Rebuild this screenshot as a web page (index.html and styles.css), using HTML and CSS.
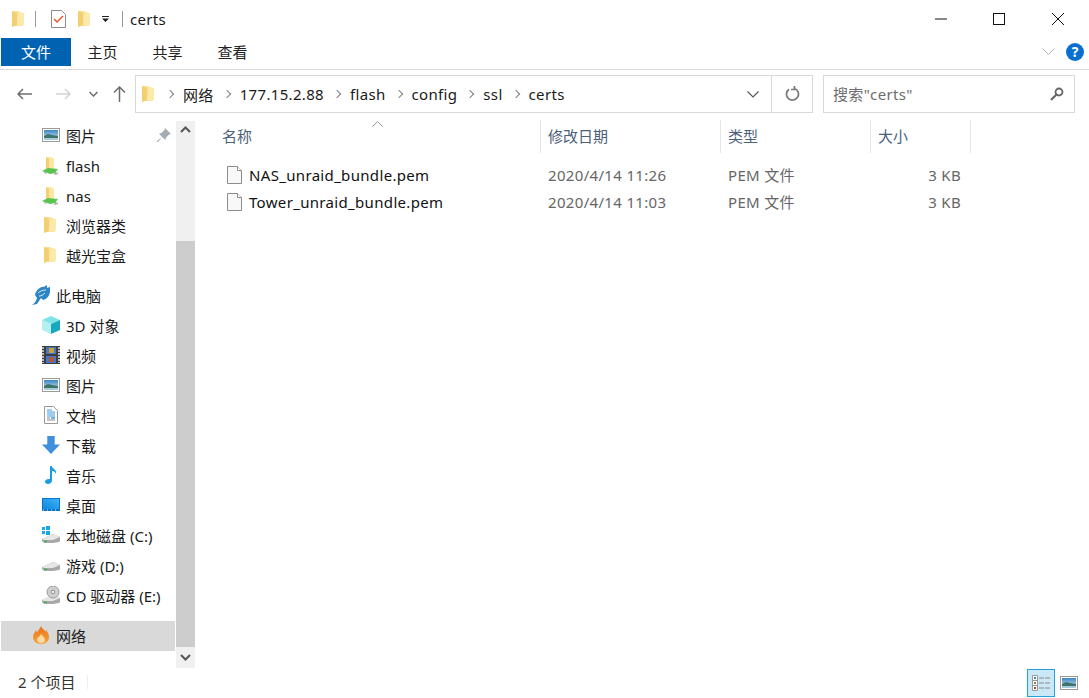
FILE: index.html
```html
<!DOCTYPE html>
<html lang="zh-CN">
<head>
    <meta charset="UTF-8">
    <title>certs</title>
    <link rel="stylesheet" href="styles.css">
</head>
<body>
    <!-- Shared icons -->
    <svg class="defs" width="0" height="0">
        <defs>
            <linearGradient id="folderFill" x1="0" y1="0" x2="1" y2="0">
                <stop offset="0" stop-color="#f7dc8b"/>
                <stop offset="1" stop-color="#fbe9ae"/>
            </linearGradient>
            <linearGradient id="skyFill" x1="0" y1="0" x2="0" y2="1">
                <stop offset="0" stop-color="#3d86c6"/>
                <stop offset="1" stop-color="#d6e8f0"/>
            </linearGradient>
            <linearGradient id="deskFill" x1="0" y1="1" x2="1" y2="0">
                <stop offset="0" stop-color="#0f86dc"/>
                <stop offset="1" stop-color="#3cb4f7"/>
            </linearGradient>
            <linearGradient id="fireFill" x1="0" y1="0" x2="0" y2="1">
                <stop offset="0" stop-color="#e9701c"/>
                <stop offset="1" stop-color="#f6a53a"/>
            </linearGradient>
            <symbol id="folder" viewBox="0 0 14 18">
                <path d="M1 1h6l5 2v13H3l-2 1z" fill="url(#folderFill)"/>
                <path d="M1 1v16l5-2V3z" fill="#f3cf72"/>
                <path d="M8 3h5v12H6z" fill="#fde9a9"/>
            </symbol>
            <symbol id="netfolder" viewBox="0 0 18 18">
                <path d="M4 0h5l3 2v12H4z" fill="#fbe6a2"/>
                <path d="M4 0v14l3-1V2z" fill="#f3cf72"/>
                <path d="M0 14l6-3 10 1-3 4-5 1z" fill="#59c34f"/>
                <path d="M0 14l2 1 1 2 2-1zM13 15l3 1v1l-4 1z" fill="#a9a9a9"/>
            </symbol>
            <symbol id="picture" viewBox="0 0 18 14">
                <rect x="0.5" y="0.5" width="17" height="13" fill="#fff" stroke="#9a9a9a"/>
                <rect x="2" y="2" width="14" height="10" fill="url(#skyFill)"/>
                <path d="M2 8l4-2 4 1 6 1v2H2z" fill="#3f7566"/>
                <path d="M2 10h14v2H2z" fill="#a8cbdc"/>
            </symbol>
            <symbol id="cube" viewBox="0 0 18 18">
                <path d="M9 0l9 4-9 4-9-4z" fill="#7fe3ea"/>
                <path d="M0 4l9 4v10l-9-4z" fill="#b4f0f0"/>
                <path d="M18 4l-9 4v10l9-4z" fill="#17a9bd"/>
            </symbol>
            <symbol id="film" viewBox="0 0 18 18">
                <rect width="18" height="18" fill="#3d3d3d"/>
                <path d="M1 1v16M17 1v16" stroke="#bbb" stroke-width="2" stroke-dasharray="2 1"/>
                <rect x="4" y="1" width="10" height="7" fill="#4a76c0"/>
                <rect x="4" y="10" width="10" height="7" fill="#3f77d6"/>
                <rect x="7" y="2" width="5" height="5" fill="#c9a23a"/>
                <rect x="7" y="11" width="5" height="5" fill="#b5562d"/>
            </symbol>
            <symbol id="doc" viewBox="0 0 14 18">
                <path d="M.5.5h9l4 4v13H.5z" fill="#fff" stroke="#9a9a9a"/>
                <path d="M3 4h5M3 6h8M3 8h8M3 10h8" stroke="#3b9ae1"/>
                <path d="M3 12h3M3 14h8" stroke="#8a8a8a"/>
                <rect x="7" y="11" width="4" height="2" fill="#6fb0dd"/>
            </symbol>
            <symbol id="download" viewBox="0 0 17 17">
                <path d="M5 0h7v8h5l-8.500 9L0 8h5z" fill="#3f8fdc"/>
            </symbol>
            <symbol id="music" viewBox="0 0 12 18">
                <path d="M5 0h2c0 3 5 3 4 8-1-2-2-3-4-3v9.500c0 2-2 3.500-4 3.500s-3-1-3-2.500 2-3 5-2.500z" fill="#1a9de6"/>
            </symbol>
            <symbol id="desktop" viewBox="0 0 18 13">
                <rect width="18" height="13" fill="#0a75c9"/>
                <rect x="1" y="1" width="16" height="10" fill="url(#deskFill)"/>
                <path d="M1 12h16" stroke="#cfe8f8" stroke-dasharray="1 3"/>
            </symbol>
            <symbol id="drive" viewBox="0 0 18 9">
                <path d="M0 5l11-5 7 3v4l-1 1-6 1H2L0 7z" fill="#a8a8a8"/>
                <path d="M0 5l11-5 7 3-7 3H2z" fill="#e6e6e6"/>
                <rect x="2" y="6.500" width="3" height="1.500" fill="#3bb44a"/>
            </symbol>
            <symbol id="file" viewBox="0 0 15 18">
                <path d="M.5.500h10l4 4v13H.5z" fill="#f8f8f8" stroke="#8c8c8c"/>
                <path d="M10.500.500v4h4" fill="#fff" stroke="#8c8c8c"/>
            </symbol>
        </defs>
    </svg>

    <div class="window">
        <!-- Title bar -->
        <header class="titlebar">
            <div class="quick">
                <svg class="ico-folder"><use href="#folder"/></svg>
                <span class="vsep"></span>
                <svg class="ico-check" viewBox="0 0 15 18">
                    <path d="M.5.500h10l4 4v13H.5z" fill="#fff" stroke="#8c8c8c"/>
                    <path d="M3 9l3 3 6-6" fill="none" stroke="#e8562a" stroke-width="1.500"/>
                </svg>
                <svg class="ico-folder"><use href="#folder"/></svg>
                <svg class="ico-qat" viewBox="0 0 7 6">
                    <path d="M0 0h7v1H0zM0 2.500h7L3.500 6z" fill="#222"/>
                </svg>
                <span class="vsep"></span>
                <span class="title-text">certs</span>
            </div>
            <div class="win-btns">
                <svg class="win-btn" viewBox="0 0 12 12"><path d="M0 6h12" stroke="#111"/></svg>
                <svg class="win-btn" viewBox="0 0 12 12"><rect x="0.500" y="0.500" width="11" height="11" fill="none" stroke="#111"/></svg>
                <svg class="win-btn" viewBox="0 0 12 12"><path d="M0 0l12 12M12 0L0 12" stroke="#111"/></svg>
            </div>
        </header>

        <!-- Ribbon tabs -->
        <nav class="tabs">
            <a class="tab tab-file">文件</a>
            <a class="tab">主页</a>
            <a class="tab">共享</a>
            <a class="tab">查看</a>
            <span class="tabs-right">
                <svg class="ico-collapse" viewBox="0 0 13 7"><path d="M.5.500l6 6 6-6" fill="none" stroke="#b5b5b5"/></svg>
                <span class="help">?</span>
            </span>
        </nav>

        <!-- Address row -->
        <div class="addressrow">
            <div class="navbtns">
                <svg class="nav-arrow" viewBox="0 0 15 12"><path d="M15 6H1M6 1L1 6l5 5" fill="none" stroke="#6d6d6d" stroke-width="1.500"/></svg>
                <svg class="nav-arrow" viewBox="0 0 15 12"><path d="M0 6h14M9 1l5 5-5 5" fill="none" stroke="#d4d4d4" stroke-width="1.500"/></svg>
                <svg class="nav-down" viewBox="0 0 9 6"><path d="M.5 1l4 4 4-4" fill="none" stroke="#6d6d6d" stroke-width="1.500"/></svg>
                <svg class="nav-up" viewBox="0 0 13 16"><path d="M6.500 16V1M1 6.500l5.500-5.500 5.500 5.500" fill="none" stroke="#6d6d6d" stroke-width="1.500"/></svg>
            </div>
            <div class="address">
                <svg class="ico-folder crumb-folder"><use href="#folder"/></svg>
                <div class="crumbs">
                    <span class="chev"></span><span>网络</span>
                    <span class="chev"></span><span>177.15.2.88</span>
                    <span class="chev"></span><span>flash</span>
                    <span class="chev"></span><span>config</span>
                    <span class="chev"></span><span>ssl</span>
                    <span class="chev"></span><span>certs</span>
                </div>
                <svg class="addr-drop" viewBox="0 0 12 7"><path d="M.5.500L6 6 11.500.500" fill="none" stroke="#555" stroke-width="1.200"/></svg>
                <div class="refresh">
                    <svg viewBox="0 0 16 16" width="16" height="16"><path d="M5 3.200A6 6 0 1 0 10 2.300M10.500 0v3.500H7" fill="none" stroke="#777" stroke-width="1.700"/></svg>
                </div>
            </div>
            <div class="search">
                <span class="search-text">搜索"certs"</span>
                <svg viewBox="0 0 14 14" width="14" height="14"><circle cx="9" cy="5" r="3.500" fill="none" stroke="#666" stroke-width="1.800"/><path d="M6.500 7.500L1 13" stroke="#666" stroke-width="2.200"/></svg>
            </div>
        </div>

        <!-- Main area -->
        <div class="main">
            <aside class="sidebar">
                <ul class="tree">
                    <li class="item">
                        <svg class="ic"><use href="#picture" y="2" height="14"/></svg>图片
                        <svg class="pin" viewBox="0 0 14 14"><path d="M8 0l6 6-2 .500-3 3-.500 2.500L5 9l-4 5-1 0 0-1 5-4-3-3.500L4.500 5l3-3z" fill="#a3abb3"/></svg>
                    </li>
                    <li class="item item-net"><svg class="ic"><use href="#netfolder"/></svg>flash</li>
                    <li class="item item-net"><svg class="ic"><use href="#netfolder"/></svg>nas</li>
                    <li class="item"><svg class="ic"><use href="#folder" x="1" width="14" height="18"/></svg>浏览器类</li>
                    <li class="item"><svg class="ic"><use href="#folder" x="1" width="14" height="18"/></svg>越光宝盒</li>
                </ul>
                <ul class="tree">
                    <li class="item root">
                        <svg class="ic ic-logo" viewBox="0 0 18 20">
                            <path d="M0 20c3-2 4-4 5-7L3 10c1-5 6-9 9-8l3-2v3l3-1c1 7-2 12-7 13l-2-2-4 6z" fill="#2c86c4"/>
                            <path d="M6 8c2-2 5-3 8-3M7 11c2 0 4-1 6-3" stroke="#d7ecf7" fill="none"/>
                        </svg>此电脑
                    </li>
                    <li class="item"><svg class="ic"><use href="#cube"/></svg>3D 对象</li>
                    <li class="item"><svg class="ic"><use href="#film"/></svg>视频</li>
                    <li class="item"><svg class="ic"><use href="#picture" y="2" height="14"/></svg>图片</li>
                    <li class="item"><svg class="ic"><use href="#doc" x="2" width="14" height="18"/></svg>文档</li>
                    <li class="item"><svg class="ic"><use href="#download"/></svg>下载</li>
                    <li class="item"><svg class="ic"><use href="#music" x="3" width="12" height="18"/></svg>音乐</li>
                    <li class="item"><svg class="ic"><use href="#desktop" y="2" height="13"/></svg>桌面</li>
                    <li class="item">
                        <svg class="ic" viewBox="0 0 18 18">
                            <use href="#drive" y="8" width="18" height="9"/>
                            <path d="M0 1h3v3H0zM4 0h4v4H4zM0 5h3v3H0zM4 5h4v4H4z" fill="#18a8ea"/>
                        </svg>本地磁盘 (C:)
                    </li>
                    <li class="item"><svg class="ic"><use href="#drive" y="6" height="9"/></svg>游戏 (D:)</li>
                    <li class="item">
                        <svg class="ic" viewBox="0 0 18 18">
                            <use href="#drive" y="9" width="18" height="9"/>
                            <circle cx="11" cy="6" r="6" fill="#cfcfcf" stroke="#9a9a9a"/>
                            <circle cx="11" cy="6" r="1.800" fill="#f4f4f4" stroke="#8c8c8c"/>
                        </svg>CD 驱动器 (E:)
                    </li>
                </ul>
                <ul class="tree">
                    <li class="item root selected">
                        <svg class="ic" viewBox="0 0 16 18">
                            <path d="M8 0c1 3 3 3 5 6 0-1 0-2-.500-2.500C15 6 16 9 16 11c0 4-3 7-8 7s-8-3-8-7c0-3 2-5 3-7 0 1 .500 2 1 2.500C5 4 7 3 8 0z" fill="url(#fireFill)"/>
                            <path d="M8 8c1 2 4 3 4 6 0 2-2 3-4 3s-4-1-4-3c0-3 3-3 4-6z" fill="#fcd9a0"/>
                        </svg>网络
                    </li>
                </ul>
            </aside>

            <div class="scrollbar">
                <div class="sb-btn"><svg viewBox="0 0 11 7" width="11" height="7"><path d="M1 6l4.500-4.500L10 6" fill="none" stroke="#555" stroke-width="2"/></svg></div>
                <div class="sb-track"></div>
                <div class="sb-thumb"></div>
                <div class="sb-btn sb-end"><svg viewBox="0 0 11 7" width="11" height="7"><path d="M1 1l4.500 4.500L10 1" fill="none" stroke="#555" stroke-width="2"/></svg></div>
            </div>

            <section class="files">
                <div class="file-head">
                    <div class="col col-name">名称<svg class="sort" viewBox="0 0 11 6"><path d="M.5 5.500l5-5 5 5" fill="none" stroke="#999"/></svg></div>
                    <div class="col">修改日期</div>
                    <div class="col">类型</div>
                    <div class="col">大小</div>
                </div>
                <div class="file-row">
                    <div class="cell-name"><svg class="ico-file"><use href="#file"/></svg>NAS_unraid_bundle.pem</div>
                    <div class="cell">2020/4/14 11:26</div>
                    <div class="cell">PEM 文件</div>
                    <div class="cell cell-size">3 KB</div>
                </div>
                <div class="file-row">
                    <div class="cell-name"><svg class="ico-file"><use href="#file"/></svg>Tower_unraid_bundle.pem</div>
                    <div class="cell">2020/4/14 11:03</div>
                    <div class="cell">PEM 文件</div>
                    <div class="cell cell-size">3 KB</div>
                </div>
            </section>
        </div>

        <!-- Status bar -->
        <footer class="statusbar">
            <span class="count">2 个项目</span>
            <span class="status-sep"></span>
            <div class="views">
                <div class="view-btn active">
                    <svg viewBox="0 0 19 16" width="19" height="16">
                        <path d="M.500.500h5v15h-5z" fill="#fff" stroke="#999"/>
                        <path d="M.500 5.500h5M.500 10.500h5" stroke="#999"/>
                        <rect x="2" y="2" width="2" height="2" fill="#3e8f9c"/>
                        <rect x="2" y="7" width="2" height="2" fill="#8c8a34"/>
                        <rect x="2" y="12" width="2" height="2" fill="#b5432c"/>
                        <path d="M7 3h5M13 3h5M7 8h5M13 8h5M7 13h5M13 13h5" stroke="#8a8a8a"/>
                    </svg>
                </div>
                <svg class="view-pic"><use href="#picture"/></svg>
            </div>
        </footer>
    </div>
</body>
</html>
```

FILE: styles.css
```css
/* Reset and Base Styles */
* {
    margin: 0;
    padding: 0;
    box-sizing: border-box;
}

html, body {
    width: 1089px;
    height: 698px;
    overflow: hidden;
    background-color: #fff;
}

body {
    font-family: "Noto Sans", "Noto Sans CJK SC", sans-serif;
    font-size: 15px;
    color: #1a1a1a;
}

.defs {
    display: block;
    height: 0;
}

svg {
    display: block;
    flex: none;
}

.window {
    display: flex;
    flex-direction: column;
    height: 698px;
}

/* Title bar */
.titlebar {
    display: flex;
    justify-content: space-between;
    height: 38px;
    flex: none;
}

.quick {
    display: flex;
    align-items: center;
    padding-left: 11px;
}

.ico-folder {
    width: 14px;
    height: 18px;
}

.vsep {
    width: 1px;
    height: 16px;
    background-color: #9a9a9a;
    margin: 0 10px;
}

.ico-check {
    width: 15px;
    height: 18px;
    margin: 0 11px 0 5px;
}

.ico-qat {
    width: 7px;
    height: 6px;
    margin-left: 11px;
    margin-right: 3px;
}

.title-text {
    margin-left: -3px;
    line-height: 36px;
    letter-spacing: 0.33px;
}

.win-btns {
    display: flex;
    align-items: center;
    padding-right: 25px;
    gap: 46px;
}

.win-btn {
    width: 12px;
    height: 12px;
}

.win-btn:last-child {
    margin-left: 1px;
}

/* Ribbon tabs */
.tabs {
    display: flex;
    align-items: center;
    height: 32px;
    flex: none;
    padding: 0 5px 4px 1px;
    border-bottom: 1px solid #dadada;
}

.tab {
    width: 65px;
    height: 28px;
    line-height: 28px;
    text-align: center;
    color: #222;
}

.tab-file {
    width: 70px;
    margin-right: -1px;
    background-color: #0063b1;
    color: #fff;
}

.tabs-right {
    margin-left: auto;
    display: flex;
    align-items: center;
    gap: 11px;
}

.ico-collapse {
    width: 13px;
    height: 7px;
}

.help {
    width: 18px;
    height: 18px;
    border-radius: 50%;
    background-color: #0b6fd1;
    color: #fff;
    font-size: 14px;
    font-weight: bold;
    line-height: 18px;
    text-align: center;
}

/* Address row */
.addressrow {
    display: flex;
    align-items: center;
    height: 48px;
    flex: none;
    padding: 0 14px 0 17px;
}

.navbtns {
    display: flex;
    align-items: center;
    width: 118px;
}

.nav-arrow {
    width: 15px;
    height: 12px;
    margin-right: 24px;
}

.nav-arrow + .nav-arrow {
    margin-right: 18px;
}

.nav-down {
    width: 9px;
    height: 6px;
    margin-right: 15px;
}

.nav-up {
    width: 13px;
    height: 16px;
}

.address {
    display: flex;
    align-items: center;
    width: 678px;
    height: 38px;
    border: 1px solid #d9d9d9;
    padding-left: 5px;
}

.crumb-folder {
    margin-right: 12px;
}

.crumbs {
    display: flex;
    align-items: center;
    gap: 10px;
    flex: 1;
    white-space: nowrap;
    letter-spacing: 0.33px;
}

.chev {
    width: 6px;
    height: 6px;
    border-top: 1.500px solid #808080;
    border-right: 1.500px solid #808080;
    transform: rotate(45deg);
}

.addr-drop {
    width: 12px;
    height: 7px;
    margin-right: 12px;
}

.refresh {
    display: flex;
    align-items: center;
    justify-content: center;
    width: 41px;
    height: 36px;
    border-left: 1px solid #d9d9d9;
}

.search {
    display: flex;
    align-items: center;
    justify-content: space-between;
    width: 252px;
    height: 38px;
    margin-left: 10px;
    border: 1px solid #d9d9d9;
    padding: 0 10px 0 9px;
    color: #6d6d6d;
}

.search-text {
    margin-bottom: 2px;
    letter-spacing: 0.33px;
}

/* Main area */
.main {
    display: flex;
    flex: 1;
    min-height: 0;
}

.sidebar {
    width: 176px;
    flex: none;
    padding: 3px 0 0 1px;
}

.tree {
    list-style: none;
    margin-bottom: 10px;
}

.item {
    position: relative;
    display: flex;
    align-items: center;
    height: 30px;
    padding: 0 0 2px 41px;
    white-space: nowrap;
}

.item-net {
    padding-bottom: 0;
}

.ic {
    width: 18px;
    height: 18px;
    margin-right: 6px;
}

.ic-logo {
    height: 20px;
}

.root {
    padding-left: 31px;
}

.selected {
    width: 174px;
    background-color: #d9d9d9;
}

.pin {
    position: absolute;
    left: 156px;
    top: 7px;
    width: 14px;
    height: 14px;
}

/* Sidebar scrollbar */
.scrollbar {
    display: flex;
    flex-direction: column;
    width: 19px;
    flex: none;
    margin: 3px 1px 0 0;
    background-color: #f0f0f0;
}

.sb-btn {
    display: flex;
    justify-content: center;
    align-items: center;
    height: 17px;
}

.sb-track {
    height: 103px;
}

.sb-thumb {
    flex: 1;
    background-color: #cdcdcd;
}

.sb-end {
    height: 21px;
}

/* File list */
.files {
    flex: 1;
    padding-top: 2px;
}

.file-head {
    display: grid;
    grid-template-columns: 345px 180px 150px 100px;
    height: 33px;
    margin-bottom: 8px;
}

.col {
    position: relative;
    display: flex;
    align-items: center;
    padding: 0 0 2px 7px;
    border-right: 1px solid #e5e5e5;
    color: #4c607a;
}

.col-name {
    padding-left: 26px;
}

.sort {
    position: absolute;
    left: 176px;
    top: 1px;
    width: 11px;
    height: 6px;
}

.file-row {
    display: grid;
    grid-template-columns: 344px 180px 150px 100px;
    align-items: center;
    height: 27px;
}

.cell-name {
    display: flex;
    align-items: center;
    padding-left: 31px;
    color: #111;
    letter-spacing: 0.33px;
}

.ico-file {
    width: 15px;
    height: 18px;
    margin-right: 7px;
}

.cell {
    padding-left: 8px;
    color: #666;
    letter-spacing: 0.33px;
}

.cell-size {
    padding: 0 9px 0 0;
    text-align: right;
}

/* Status bar */
.statusbar {
    display: flex;
    align-items: center;
    height: 30px;
    flex: none;
    padding: 0 11px 0 18px;
}

.count {
    margin-bottom: 4px;
    color: #333;
}

.status-sep {
    width: 1px;
    height: 14px;
    margin: 0 0 2px 12px;
    background-color: #eee;
}

.views {
    margin-left: auto;
    display: flex;
    align-items: center;
    gap: 5px;
}

.view-btn {
    display: flex;
    align-items: center;
    justify-content: center;
    width: 28px;
    height: 28px;
    border: 1px solid #26a0da;
    background-color: #cbe8f6;
}

.view-pic {
    width: 18px;
    height: 14px;
}
```
